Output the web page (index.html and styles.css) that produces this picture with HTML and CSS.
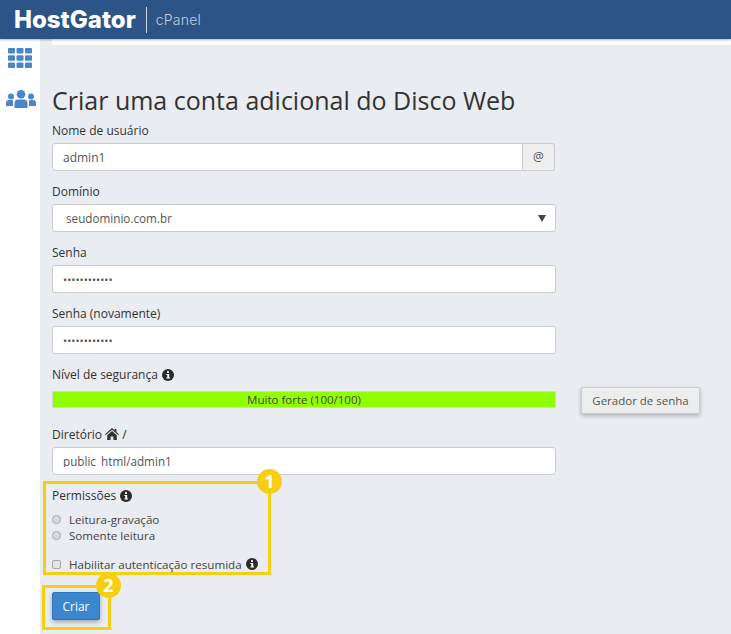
FILE: index.html
```html
<!DOCTYPE html>
<html lang="pt-BR">
<head>
<meta charset="utf-8">
<title>Criar uma conta adicional do Disco Web</title>
<link rel="stylesheet" href="styles.css">
</head>
<body>
<header class="topbar">
  <span class="logo">HostGator</span>
  <span class="logo-sep"></span>
  <span class="product">cPanel</span>
</header>
<div class="shell">
  <nav class="side">
    <svg class="ico-grid" viewBox="0 0 24 20" width="24" height="20">
      <g fill="#4a86c8">
        <rect x="0" y="0" width="7" height="5.6" rx="1"/><rect x="8.5" y="0" width="7" height="5.6" rx="1"/><rect x="17" y="0" width="7" height="5.6" rx="1"/>
        <rect x="0" y="7.2" width="7" height="5.6" rx="1"/><rect x="8.5" y="7.2" width="7" height="5.6" rx="1"/><rect x="17" y="7.2" width="7" height="5.6" rx="1"/>
        <rect x="0" y="14.4" width="7" height="5.6" rx="1"/><rect x="8.5" y="14.4" width="7" height="5.6" rx="1"/><rect x="17" y="14.4" width="7" height="5.6" rx="1"/>
      </g>
    </svg>
    <svg class="ico-users" viewBox="0 0 30 18" width="30" height="18">
      <g fill="#4a86c8">
        <circle cx="15" cy="4.3" r="4.3"/>
        <circle cx="5" cy="6.5" r="3"/>
        <circle cx="25" cy="6.5" r="3"/>
        <path d="M8.5 18v-4.5C8.500 11 10 9.500 12 9.500h6c2 0 3.500 1.500 3.500 4V18z"/>
        <path d="M0 16v-3c0-1.800 1.200-3 3-3h3.500C7 10.500 7 11 7 13v3z"/>
        <path d="M30 16v-3c0-1.800-1.200-3-3-3h-3.500c-.5.500-.5 1-.5 3v3z"/>
      </g>
    </svg>
  </nav>
  <main class="main">
    <div class="strip"></div>
    <h1 class="title">Criar uma conta adicional do Disco Web</h1>
    <form class="form">
      <div class="field">
        <div class="label">Nome de usuário</div>
        <div class="group">
          <div class="input input-joined">admin1</div>
          <div class="addon">@</div>
        </div>
      </div>
      <div class="field">
        <div class="label">Domínio</div>
        <div class="input select"><span>seudominio.com.br</span><span class="caret"></span></div>
      </div>
      <div class="field">
        <div class="label">Senha</div>
        <div class="input dots">••••••••••••</div>
      </div>
      <div class="field">
        <div class="label">Senha (novamente)</div>
        <div class="input dots">••••••••••••</div>
      </div>
      <div class="field meter-field">
        <div class="label">Nível de segurança <svg class="info" viewBox="0 0 12 12" width="12" height="12"><circle cx="6" cy="6" r="6" fill="#2a2a2a"/><rect x="5" y="2.200" width="2" height="1.800" fill="#fff"/><path d="M4.300 5h2.900v3.600h.9v1H4.300v-1h1V6h-1z" fill="#fff"/></svg></div>
        <div class="meter-row">
          <div class="meter">Muito forte (100/100)</div>
          <button type="button" class="gen">Gerador de senha</button>
        </div>
      </div>
      <div class="field dir-field">
        <div class="label">Diretório <svg class="home" viewBox="0 0 14 12" width="14" height="12"><path fill="#333" d="M7 0l2.600 2.300V1h1.800v2.900L14 6.200l-.8.900L7 1.700.8 7.100 0 6.200z"/><path fill="#333" d="M7 3l4.800 4.200V12H8.400V8.500H5.600V12H2.200V7.200z"/></svg> /</div>
        <div class="input clipped"><span>public_html/admin1</span></div>
      </div>
      <div class="perm">
        <div class="label">Permissões <svg class="info" viewBox="0 0 12 12" width="12" height="12"><circle cx="6" cy="6" r="6" fill="#2a2a2a"/><rect x="5" y="2.200" width="2" height="1.800" fill="#fff"/><path d="M4.300 5h2.900v3.600h.9v1H4.300v-1h1V6h-1z" fill="#fff"/></svg></div>
        <div class="opts">
          <div class="opt"><span class="radio"></span>Leitura-gravação</div>
          <div class="opt"><span class="radio"></span>Somente leitura</div>
        </div>
        <div class="opt opt-check"><span class="check"></span>Habilitar autenticação resumida <svg class="info" viewBox="0 0 12 12" width="12" height="12"><circle cx="6" cy="6" r="6" fill="#2a2a2a"/><rect x="5" y="2.200" width="2" height="1.800" fill="#fff"/><path d="M4.300 5h2.900v3.600h.9v1H4.300v-1h1V6h-1z" fill="#fff"/></svg></div>
      </div>
      <button type="button" class="submit">Criar</button>
    </form>
  </main>
</div>
<div class="callout box-one"><span class="badge">1</span></div>
<div class="callout box-two"><span class="badge">2</span></div>
</body>
</html>
```
FILE: styles.css
```css
* { box-sizing: border-box; }
html, body { margin: 0; height: 100%; }
body {
  position: relative;
  overflow: hidden;
  display: flex;
  flex-direction: column;
  font-family: "Open Sans", sans-serif;
  font-size: 12px;
  color: #333;
  background: #e9ecf1;
}
.topbar {
  height: 39px;
  flex: none;
  display: flex;
  align-items: center;
  padding: 0 0 0 14px;
  background: #2c5487;
  box-shadow: 0 1px 2px rgba(0,0,0,.3);
  position: relative;
  z-index: 2;
}
.logo {
  font-family: Inter, sans-serif;
  font-weight: 800;
  font-size: 24px;
  letter-spacing: 0;
  color: #fff;
}
.logo-sep { width: 1px; height: 26px; margin: 0 9px 0 10px; background: #c9d3e0; }
.product { font-family: Inter, sans-serif; font-size: 14px; font-weight: 300; letter-spacing: .2px; color: #c3cfdf; }
.shell { flex: 1; display: flex; min-height: 0; }
.side {
  width: 40px;
  flex: none;
  background: #fff;
  display: flex;
  flex-direction: column;
  align-items: center;
  padding-top: 9px;
  gap: 22px;
}
.ico-users { margin-left: 1px; }
.main { flex: 1; padding-left: 12px; min-width: 0; }
.strip { height: 6px; background: #fff; }
.title {
  margin: 38px 0 5px;
  font-size: 25px;
  line-height: 34px;
  font-weight: 400;
  color: #333;
}
.form { width: 504px; display: flex; flex-direction: column; }
.field { height: 61px; }
.label { height: 21px; line-height: 18px; font-size: 12px; color: #333; }
.info { vertical-align: -1.500px; margin-left: 1px; }
.home { vertical-align: -1px; }
.group { display: flex; width: 503px; }
.input {
  height: 28px;
  width: 504px;
  background: #fff;
  border: 1px solid #ccc;
  border-radius: 3px;
  padding: 0 10px;
  line-height: 28px;
  font-size: 11.700px;
  color: #555;
}
.input-joined { flex: 1; width: auto; border-radius: 3px 0 0 3px; font-size: 12px; }
.addon {
  width: 32px;
  height: 28px;
  background: #eee;
  border: 1px solid #ccc;
  border-left: 0;
  border-radius: 0 3px 3px 0;
  text-align: center;
  line-height: 26px;
  font-size: 12px;
  color: #555;
}
.select { display: flex; justify-content: space-between; align-items: center; padding: 0 9px 0 13px; }
.caret { width: 0; height: 0; border: 4px solid transparent; border-top: 7px solid #444; border-bottom: 0; }
.dots { font-size: 11px; color: #555; }
.meter-field .label { height: 25px; }
.meter-row { position: relative; }
.meter {
  height: 17px;
  width: 504px;
  background-color: #90ff00;
  border: 1px solid #d4d7d2;
  text-align: center;
  line-height: 15px;
  font-size: 11.500px;
  color: #444;
}
.gen {
  position: absolute;
  left: 529px;
  top: -4px;
  width: 119px;
  height: 27px;
  background: #eeeded;
  border: 1px solid #ccc;
  border-radius: 2px;
  box-shadow: 0 2px 4px rgba(0,0,0,.25);
  font: 11.500px "Open Sans", sans-serif;
  color: #555;
  padding: 0;
}
.dir-field { margin-top: -1px; height: 61px; }
.clipped { overflow: hidden; }
.clipped span { display: block; height: 19px; overflow: hidden; line-height: 27px; }
.perm { height: 94px; }
.perm .label { height: 19px; }
.opts { display: flex; flex-direction: column; margin-top: 5px; }
.opt { display: flex; align-items: center; height: 16px; font-size: 11.600px; color: #444; }
.opt .info { margin-left: 4px; }
.opt-check { margin-top: 13px; }
.radio {
  width: 9px; height: 9px; margin-right: 8px;
  border-radius: 50%;
  border: 1px solid #a8a8a8;
  background: #dcdcdc;
}
.check {
  width: 9px; height: 9px; margin-right: 8px;
  border-radius: 2px;
  border: 1px solid #a8a8a8;
  background: #e4e4e4;
}
.submit {
  margin-top: 11px;
  width: 48px;
  height: 28px;
  background: #3a87cf;
  border: 1px solid #2f78bd;
  border-radius: 2px;
  box-shadow: 0 2px 4px rgba(0,0,0,.3);
  font: 12px "Open Sans", sans-serif;
  color: #fff;
  padding: 0;
}
.callout { position: absolute; border: 3px solid #f6cf12; }
.box-one { left: 43px; top: 481px; width: 228px; height: 94px; }
.box-two { left: 42px; top: 585px; width: 69px; height: 45px; }
.badge {
  position: absolute;
  width: 25px;
  height: 25px;
  border-radius: 50%;
  background: #f6cf12;
  color: #fff;
  font-weight: 700;
  font-size: 18px;
  line-height: 25px;
  text-align: center;
}
.box-one .badge { right: -14px; top: -15px; }
.box-two .badge { right: -13px; top: -15px; }
```
